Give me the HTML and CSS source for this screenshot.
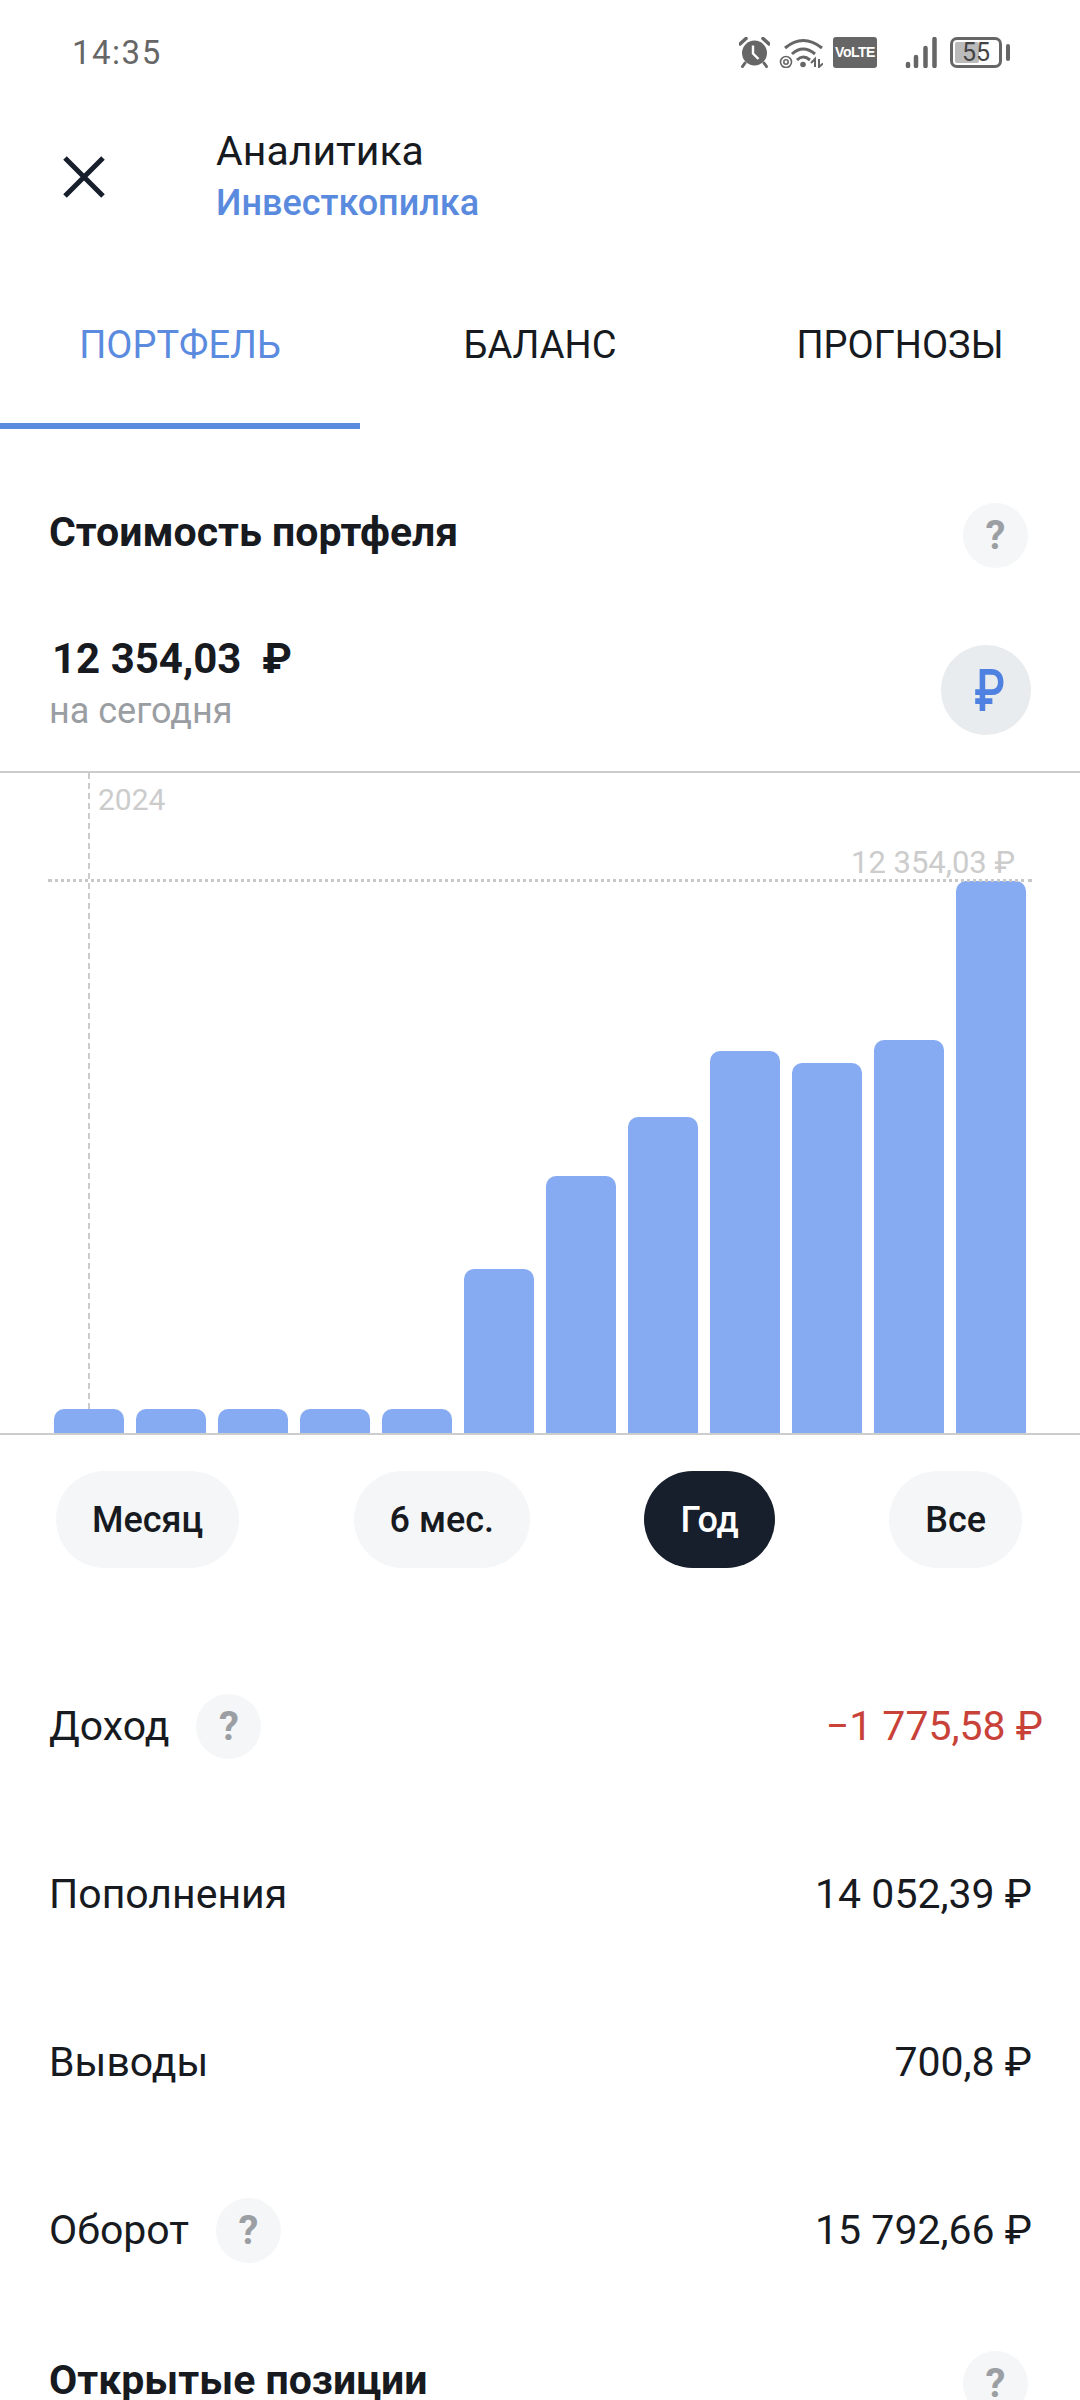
FILE: index.html
```html
<!DOCTYPE html>
<html lang="ru">
<head>
    <meta charset="UTF-8">
    <meta name="viewport" content="width=device-width, initial-scale=1.0">
    <title>Аналитика</title>
    <link rel="stylesheet" href="styles.css">
</head>
<body>
    <div class="page">
        <div class="status-bar">
            <span class="time">14:35</span>
            <div class="status-icons">
                <svg class="icon-alarm" width="31" height="31" viewBox="0 0 31 31">
                    <circle cx="15.5" cy="16" r="12.5" fill="#666"/>
                    <path d="M1 7 L7 1.5 M30 7 L24 1.5" stroke="#666" stroke-width="3.5" stroke-linecap="round"/>
                    <path d="M6 26 L3.5 29.5 M25 26 L27.5 29.5" stroke="#666" stroke-width="3" stroke-linecap="round"/>
                    <path d="M14 8.5 V16.5 L19.5 22" fill="none" stroke="#fff" stroke-width="2.4"/>
                </svg>
                <svg class="icon-wifi" width="44" height="31" viewBox="0 0 44 31">
                    <path d="M6 11 Q24 -4 43 11" fill="none" stroke="#666" stroke-width="3"/>
                    <path d="M13 17 Q24 7 36 17" fill="none" stroke="#666" stroke-width="3"/>
                    <path d="M18 23 Q24 17 31 23" fill="none" stroke="#666" stroke-width="3"/>
                    <circle cx="24" cy="27.5" r="2.800" fill="#666"/>
                    <circle cx="7" cy="25" r="5.500" fill="none" stroke="#666" stroke-width="1.600"/>
                    <circle cx="7" cy="25" r="2.200" fill="none" stroke="#666" stroke-width="1.600"/>
                    <path d="M32 26 L36 22 V30 M40 22 V30 L44 26.500" fill="none" stroke="#666" stroke-width="2"/>
                </svg>
                <span class="volte">VoLTE</span>
                <svg class="icon-signal" width="33" height="31" viewBox="0 0 33 31">
                    <path d="M3 27 V29 M11 20 V29 M20.500 11 V29 M29.500 2 V29" stroke="#666" stroke-width="4.500" stroke-linecap="round"/>
                </svg>
                <div class="battery">
                    <div class="battery-body">
                        <div class="battery-fill"></div>
                        <span class="battery-level">55</span>
                    </div>
                    <div class="battery-cap"></div>
                </div>
            </div>
        </div>

        <div class="header">
            <svg class="close" width="42" height="42" viewBox="0 0 42 42">
                <path d="M2 2 L40 40 M40 2 L2 40" stroke="#171f2c" stroke-width="5"/>
            </svg>
            <div class="header-text">
                <div class="header-title">Аналитика</div>
                <div class="header-sub">Инвесткопилка</div>
            </div>
        </div>

        <div class="tabs">
            <div class="tab active">ПОРТФЕЛЬ</div>
            <div class="tab">БАЛАНС</div>
            <div class="tab">ПРОГНОЗЫ</div>
        </div>

        <div class="section-head first">
            <span class="section-title">Стоимость портфеля</span>
            <span class="help">?</span>
        </div>

        <div class="summary">
            <div>
                <div class="amount">12 354,03 &nbsp;₽</div>
                <div class="amount-note">на сегодня</div>
            </div>
            <div class="currency"><span class="currency-sign">₽</span></div>
        </div>

        <div class="chart">
            <div class="bars">
                <div class="bar" style="height: 24px"></div>
                <div class="bar" style="height: 24px"></div>
                <div class="bar" style="height: 24px"></div>
                <div class="bar" style="height: 24px"></div>
                <div class="bar" style="height: 24px"></div>
                <div class="bar" style="height: 164px"></div>
                <div class="bar" style="height: 257px"></div>
                <div class="bar" style="height: 316px"></div>
                <div class="bar" style="height: 382px"></div>
                <div class="bar" style="height: 370px"></div>
                <div class="bar" style="height: 393px"></div>
                <div class="bar" style="height: 552px"></div>
            </div>
            <div class="year-line"></div>
            <span class="year-label">2024</span>
            <div class="max-line"></div>
            <span class="max-label">12 354,03 ₽</span>
        </div>

        <div class="periods">
            <div class="period">Месяц</div>
            <div class="period">6 мес.</div>
            <div class="period selected">Год</div>
            <div class="period">Все</div>
        </div>

        <div class="rows">
            <div class="row">
                <div class="row-label">Доход <span class="help">?</span></div>
                <div class="row-value negative">−1 775,58 ₽</div>
            </div>
            <div class="row">
                <div class="row-label">Пополнения</div>
                <div class="row-value">14 052,39 ₽</div>
            </div>
            <div class="row">
                <div class="row-label">Выводы</div>
                <div class="row-value">700,8 ₽</div>
            </div>
            <div class="row">
                <div class="row-label">Оборот <span class="help">?</span></div>
                <div class="row-value">15 792,66 ₽</div>
            </div>
        </div>

        <div class="section-head last">
            <span class="section-title">Открытые позиции</span>
            <span class="help">?</span>
        </div>
    </div>
</body>
</html>
```

FILE: styles.css
```css
body {
    margin: 0;
    font-family: Roboto, "Noto Sans", sans-serif;
    color: #171a1f;
    background-color: #fff;
}
.page {
    width: 1080px;
    height: 2400px;
    overflow: hidden;
}

/* status bar */
.status-bar {
    display: flex;
    align-items: center;
    justify-content: space-between;
    height: 104px;
    padding: 0 70px 0 72px;
}
.time {
    font-size: 33px;
    letter-spacing: 1.5px;
    color: #666;
}
.status-icons {
    display: flex;
    align-items: center;
}
.icon-wifi {
    margin-left: 9px;
}
.volte {
    display: flex;
    align-items: center;
    justify-content: center;
    width: 44px;
    height: 31px;
    margin-left: 10px;
    border-radius: 3px;
    background-color: #666;
    color: #fff;
    font-family: "Liberation Sans Narrow", "Liberation Sans", sans-serif;
    font-size: 14px;
    font-weight: bold;
    letter-spacing: -0.5px;
}
.icon-signal {
    margin-left: 28px;
}
.battery {
    display: flex;
    align-items: center;
    margin-left: 12px;
}
.battery-body {
    position: relative;
    display: flex;
    align-items: center;
    justify-content: center;
    width: 52px;
    height: 31px;
    box-sizing: border-box;
    border: 3px solid #666;
    border-radius: 7px;
}
.battery-fill {
    position: absolute;
    left: 2px;
    top: 2px;
    bottom: 2px;
    width: 24px;
    border-radius: 2px;
    background-color: #bbb;
}
.battery-level {
    position: relative;
    font-size: 25px;
    color: #444;
}
.battery-cap {
    width: 4px;
    height: 17px;
    margin-left: 4px;
    border-radius: 2px;
    background-color: #666;
}

/* header */
.header {
    display: flex;
    align-items: center;
    height: 146px;
    padding-left: 63px;
}
.header-text {
    margin-left: 111px;
}
.header-title {
    font-size: 41px;
    line-height: 52px;
}
.header-sub {
    font-size: 36px;
    line-height: 52px;
    font-weight: 500;
    color: #5a8ade;
}

/* tabs */
.tabs {
    display: flex;
}
.tab {
    width: 360px;
    height: 173px;
    border-bottom: 6px solid transparent;
    line-height: 190px;
    font-size: 38px;
    text-align: center;
}
.tab.active {
    color: #5b8bdf;
    border-bottom-color: #5b8bdf;
}

/* section heads */
.section-head {
    display: flex;
    align-items: center;
    justify-content: space-between;
    padding: 0 52px 0 49px;
}
.section-head.first {
    margin-top: 74px;
}
.section-head.last {
    margin-top: 37px;
}
.section-title {
    font-size: 41px;
    line-height: 48px;
    font-weight: 700;
    padding-bottom: 8px;
}
.help {
    display: inline-flex;
    align-items: center;
    justify-content: center;
    width: 65px;
    height: 65px;
    border-radius: 50%;
    background-color: #f5f6f7;
    color: #9b9fa4;
    font-size: 40px;
    font-weight: 700;
}

/* summary */
.summary {
    display: flex;
    align-items: flex-start;
    justify-content: space-between;
    margin-top: 64px;
    padding: 0 49px;
}
.amount {
    margin-top: 3px;
    margin-left: 3px;
    font-size: 42px;
    font-weight: 700;
    line-height: 48px;
}
.amount-note {
    margin-top: 8px;
    font-size: 36px;
    line-height: 40px;
    color: #9a9ea3;
}
.currency {
    display: flex;
    align-items: center;
    justify-content: center;
    width: 90px;
    height: 90px;
    margin-top: 13px;
    border-radius: 50%;
    background-color: #e9ecee;
    color: #4f82e0;
    font-size: 60px;
    font-weight: 500;
}
.currency-sign {
    margin-left: 8px;
    transform: scaleX(0.75);
}

/* chart */
.chart {
    position: relative;
    height: 660px;
    margin-top: 36px;
    border-top: 2px solid #ccc;
    border-bottom: 2px solid #ccc;
}
.bars {
    display: flex;
    align-items: flex-end;
    gap: 12px;
    height: 100%;
    padding-left: 54px;
}
.bar {
    width: 70px;
    border-radius: 10px 10px 0 0;
    background-color: #86abf3;
}
.year-line {
    position: absolute;
    left: 88px;
    top: 0;
    height: 636px;
    border-left: 2px dashed #ccc;
}
.year-label {
    position: absolute;
    left: 98px;
    top: 9px;
    font-size: 30px;
    color: #ccc;
}
.max-line {
    position: absolute;
    left: 48px;
    right: 48px;
    top: 106px;
    border-top: 3px dotted #c8c8c8;
}
.max-label {
    position: absolute;
    right: 65px;
    top: 71px;
    font-size: 31px;
    color: #ccc;
}

/* period switch */
.periods {
    display: flex;
    justify-content: space-between;
    margin-top: 36px;
    padding: 0 58px 0 56px;
}
.period {
    display: flex;
    align-items: center;
    justify-content: center;
    height: 97px;
    padding: 0 36px;
    border-radius: 49px;
    background-color: #f5f6f8;
    font-size: 36px;
    font-weight: 500;
}
.period.selected {
    background-color: #171f2c;
    color: #fff;
}

/* rows */
.rows {
    margin-top: 74px;
}
.row {
    display: flex;
    align-items: center;
    justify-content: space-between;
    height: 168px;
    padding: 0 48px 0 49px;
}
.row-label {
    display: flex;
    align-items: center;
    gap: 27px;
    font-size: 41px;
}
.row-value {
    font-size: 41px;
}
.row-value.negative {
    margin-right: -11px;
    color: #c8423a;
}
```
